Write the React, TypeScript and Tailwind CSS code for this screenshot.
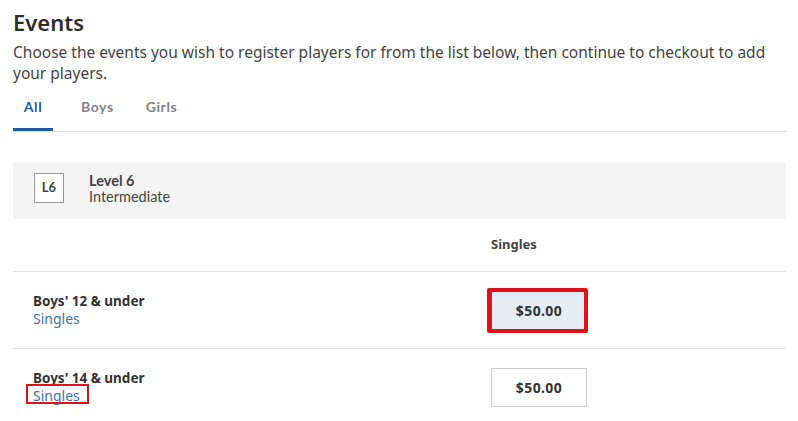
import React from "react";

const rows = [
  { name: "Boys' 12 & under", type: "Singles", price: "$50.00", selected: true },
  { name: "Boys' 14 & under", type: "Singles", price: "$50.00", selected: false },
];

export default function App() {
  return (
    <div className="min-h-screen bg-white pl-[13px] pr-[12px] text-[#333] font-['Noto_Sans',sans-serif]">
      {/* Header */}
      <h1 className="pt-2 text-[22px] leading-[28px] font-semibold text-[#2e2e2e]">Events</h1>
      <p className="mt-[6px] text-[15.5px] leading-[21px] text-[#444]">
        Choose the events you wish to register players for from the list below, then continue to checkout to add
        your players.
      </p>

      {/* Tabs */}
      <div className="mt-[9px] flex border-b border-[#dedede] font-['Lato',sans-serif] text-[14px] font-bold tracking-[0.6px]">
        <div className="w-[40px] border-b-[3px] border-[#1d5a9f] pt-[6px] pb-[13px] text-center leading-[16px] text-[#1d5a9f]">
          All
        </div>
        <div className="ml-[28px] border-b-[3px] border-transparent pt-[6px] pb-[13px] leading-[16px] text-[#848484]">
          Boys
        </div>
        <div className="ml-[32px] border-b-[3px] border-transparent pt-[6px] pb-[13px] leading-[16px] text-[#848484]">
          Girls
        </div>
      </div>

      {/* Level card */}
      <div className="mt-[30px] flex items-start bg-[#f4f4f4] pl-[21px] pt-[11px] pb-[14px] font-['Lato',sans-serif] text-[#444]">
        <div className="flex h-[30px] w-[30px] items-center justify-center border border-[#999] bg-white text-[13px] font-bold">
          L6
        </div>
        <div className="ml-[25px] text-[14.5px] leading-[16px]">
          <div className="font-bold">Level 6</div>
          <div>Intermediate</div>
        </div>
      </div>

      {/* Table */}
      <div className="flex h-[53px] items-center border-b border-[#e3e3e3]">
        <div className="w-[478px]" />
        <div className="text-[13px] font-bold text-[#444]">Singles</div>
      </div>
      {rows.map((r) => (
        <div key={r.name} className="flex h-[77px] items-center border-b border-[#e3e3e3]">
          <div className="w-[478px] pl-[20px]">
            <div className="text-[13.5px] leading-[17px] font-bold text-[#333]">{r.name}</div>
            <div className="relative w-fit text-[14px] leading-[17px] text-[#3a74ad]">
              {r.type}
              {!r.selected && (
                <span className="absolute -left-[7px] -top-[3px] h-[20px] w-[63px] border-2 border-[#e0111b]" />
              )}
            </div>
          </div>
          <div className="relative">
            <button
              className={`h-[39px] w-[96px] border text-[14px] font-bold tracking-[0.4px] text-[#333] ${
                r.selected ? "border-[#2d5f99] bg-[#e4ecf5]" : "border-[#cfcfcf] bg-white"
              }`}
            >
              {r.price}
            </button>
            {r.selected && (
              <span className="absolute -left-[4px] -top-[3px] h-[45px] w-[101px] rounded-[2px] border-[4px] border-[#e0111b]" />
            )}
          </div>
        </div>
      ))}
    </div>
  );
}
